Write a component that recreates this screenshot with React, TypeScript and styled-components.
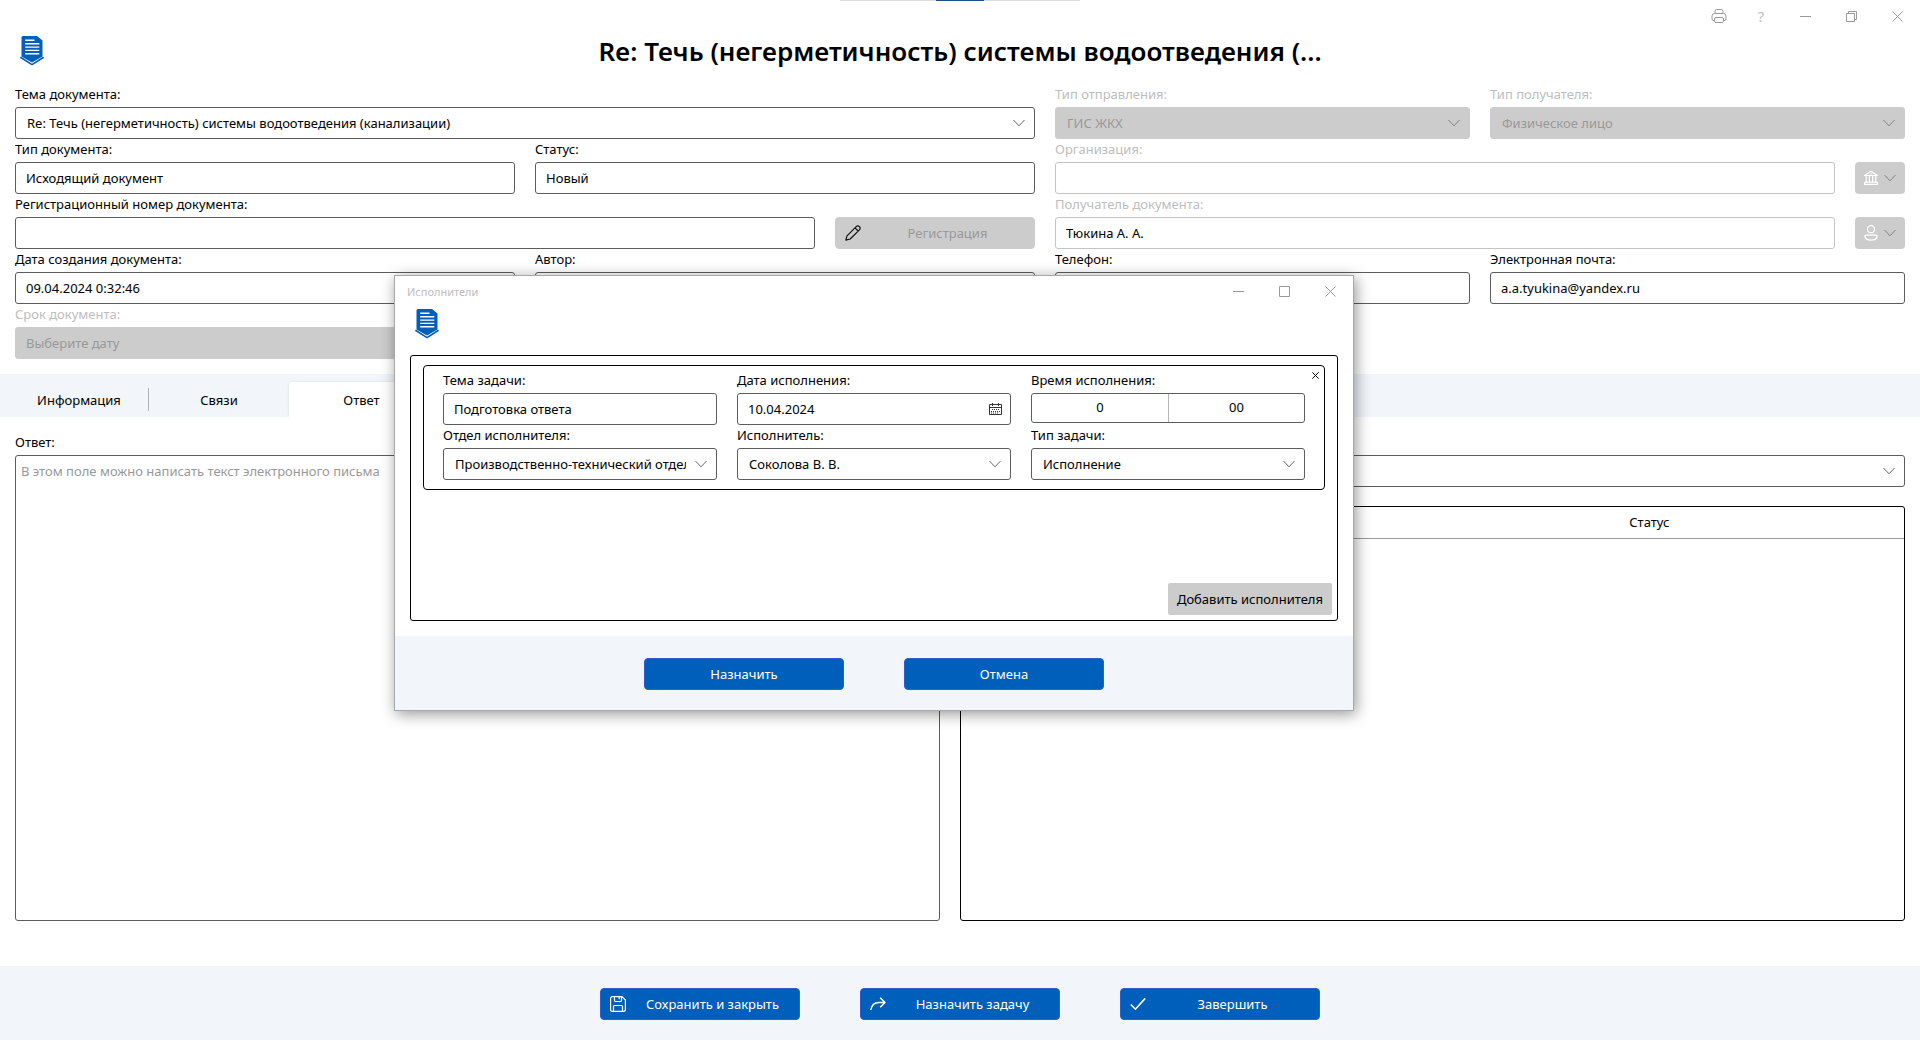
import React, { useId } from 'react';
import styled, { createGlobalStyle } from 'styled-components';

const font = '"Noto Sans", "Open Sans", sans-serif';
const ink = '#000000';
const line = '#5c5c5c';
const muted = '#999999';
const faint = '#bdbdbd';
const fill = '#cccccc';
const panel = '#f2f5fa';
const accent = '#005fba';

const GlobalStyle = createGlobalStyle`
  *, *::before, *::after { box-sizing: border-box; }
  body {
    margin: 0;
    background: #ffffff;
    color: ${ink};
    font-family: ${font};
    font-size: 13px;
  }
  button, input, select, textarea {
    margin: 0;
    font-family: inherit;
    font-size: inherit;
    color: inherit;
  }
  button { padding: 0; border: 0; background: none; }
`;

const Page = styled.div`
  display: flex;
  flex-direction: column;
  min-height: 100vh;
  position: relative;
`;

const DragBar = styled.div`
  position: absolute;
  top: 0;
  left: 50%;
  width: 240px;
  height: 1px;
  margin-left: -120px;
  background: #dcdcdc;
  &::after {
    content: '';
    display: block;
    width: 48px;
    height: 1px;
    margin: 0 auto;
    background: #1d4f86;
  }
`;

const WindowBar = styled.div`
  display: flex;
  justify-content: flex-end;
  align-items: center;
  height: 32px;
`;

const WindowButton = styled.button<{ $narrow?: boolean }>`
  display: flex;
  align-items: center;
  justify-content: center;
  width: ${(p) => (p.$narrow ? '42px' : '46px')};
  height: 32px;
  color: ${muted};
  font-size: 15px;
`;

const HelpMark = styled.span`
  color: ${faint};
`;

const TitleRow = styled.header`
  display: grid;
  grid-template-columns: 48px 1fr 48px;
  align-items: center;
  height: 52px;
  padding: 0 20px 14px;
`;

const Title = styled.h1`
  margin: 0;
  text-align: center;
  font-size: 26px;
  font-weight: 600;
  line-height: 36px;
`;

const Form = styled.form`
  display: grid;
  grid-template-columns: 6fr 5fr;
  column-gap: 20px;
  align-items: start;
  padding: 0 15px;
`;

const Column = styled.div`
  min-width: 0;
`;

const Row = styled.div<{ $cols?: string }>`
  display: grid;
  grid-template-columns: ${(p) => p.$cols ?? 'minmax(0, 1fr)'};
  column-gap: 20px;
  align-items: end;
`;

const FieldBox = styled.div<{ $grow?: boolean }>`
  display: flex;
  flex-direction: column;
  min-width: 0;
  ${(p) => (p.$grow ? 'height: 100%;' : '')}
`;

const Label = styled.label<{ $dim?: boolean }>`
  height: 23px;
  line-height: 20px;
  white-space: nowrap;
  color: ${(p) => (p.$dim ? faint : ink)};
`;

const TextInput = styled.input<{ $soft?: boolean }>`
  width: 100%;
  height: 32px;
  padding: 0 10px;
  border: 1px solid ${(p) => (p.$soft ? '#c4c4c4' : line)};
  border-radius: 3px;
  background: #ffffff;
  outline: 0;
  &::placeholder { color: ${muted}; opacity: 1; }
  &:disabled {
    border-color: ${fill};
    background: ${fill};
    color: ${muted};
  }
`;

const SelectWrap = styled.div<{ $disabled?: boolean }>`
  display: grid;
  grid-template-columns: minmax(0, 1fr) 30px;
  align-items: center;
  height: 32px;
  border: 1px solid ${(p) => (p.$disabled ? fill : line)};
  border-radius: 3px;
  background: ${(p) => (p.$disabled ? fill : '#ffffff')};
  color: ${(p) => (p.$disabled ? muted : ink)};
  svg { justify-self: center; color: ${(p) => (p.$disabled ? '#808080' : '#666666')}; }
`;

const SelectBox = styled.select`
  appearance: none;
  width: 100%;
  height: 30px;
  padding: 0 0 0 11px;
  border: 0;
  background: transparent;
  outline: 0;
  &:disabled { color: inherit; opacity: 1; }
`;

const DateWrap = styled.div`
  display: grid;
  grid-template-columns: minmax(0, 1fr) 29px;
  align-items: center;
  height: 32px;
  border: 1px solid ${line};
  border-radius: 3px;
`;

const BareInput = styled.input<{ $center?: boolean }>`
  width: 100%;
  height: ${(p) => (p.$center ? '26px' : '30px')};
  padding: 0 10px;
  border: 0;
  background: transparent;
  outline: 0;
  text-align: ${(p) => (p.$center ? 'center' : 'left')};
`;

const IconButton = styled.button`
  display: flex;
  align-items: center;
  justify-content: center;
  height: 28px;
`;

const TimeWrap = styled.div`
  display: grid;
  grid-template-columns: 1fr 1fr;
  height: 30px;
  margin-bottom: 2px;
  border: 1px solid ${line};
  border-radius: 3px;
`;

const TimePart = styled.div`
  & + & { border-left: 1px solid #b5b5b5; }
`;

const ActionButton = styled.button<{ $muted?: boolean }>`
  display: flex;
  align-items: center;
  width: 200px;
  height: 32px;
  padding-left: 9px;
  border: 1px solid ${(p) => (p.$muted ? fill : '#2f5fc4')};
  border-radius: 4px;
  background: ${(p) => (p.$muted ? fill : accent)};
  color: ${(p) => (p.$muted ? muted : '#ffffff')};
  span { flex: 1; text-align: center; }
`;

const PlainButton = styled(ActionButton)`
  padding-left: 0;
`;

const PickerButton = styled.button`
  display: flex;
  align-items: center;
  justify-content: center;
  gap: 6px;
  width: 50px;
  height: 32px;
  border-radius: 4px;
  background: ${fill};
  color: #808080;
  svg:first-child { color: #ffffff; }
`;

const Tabs = styled.nav`
  display: flex;
  align-items: flex-end;
  height: 43px;
  margin-top: 15px;
  padding-left: 9px;
  background: ${panel};
`;

const Tab = styled.button<{ $active?: boolean; $divided?: boolean }>`
  position: relative;
  width: ${(p) => (p.$active ? '145px' : '140px')};
  height: 35px;
  background: ${(p) => (p.$active ? '#ffffff' : 'transparent')};
  border-radius: 3px 3px 0 0;
  box-shadow: ${(p) => (p.$active ? '0 0 3px rgba(0, 0, 0, 0.1)' : 'none')};
  ${(p) =>
    p.$divided
      ? `&::after {
    content: '';
    position: absolute;
    top: 6px;
    right: 0;
    width: 1px;
    height: 23px;
    background: #b0b4b8;
  }`
      : ''}
`;

const Reply = styled.main`
  display: grid;
  grid-template-columns: 185fr 189fr;
  column-gap: 20px;
  flex: 1;
  padding: 15px 15px 45px;
  background: #ffffff;
  position: relative;
`;

const ReplyText = styled.textarea`
  flex: 1;
  width: 100%;
  padding: 5px;
  border: 1px solid ${line};
  border-radius: 3px;
  resize: none;
  outline: 0;
  line-height: 20px;
  &::placeholder { color: ${muted}; opacity: 1; }
`;

const Side = styled.section`
  display: flex;
  flex-direction: column;
  gap: 19px;
  padding-top: 23px;
`;

const TableFrame = styled.div`
  flex: 1;
  border: 1px solid ${ink};
  border-radius: 3px;
`;

const Table = styled.table`
  width: 100%;
  border-collapse: collapse;
  table-layout: fixed;
  th {
    height: 31px;
    padding: 0;
    border-bottom: 1px solid ${muted};
    font-weight: 400;
    text-align: center;
  }
  th:first-child { width: 46%; }
`;

const Footer = styled.footer`
  display: flex;
  justify-content: center;
  gap: 60px;
  height: 74px;
  padding-top: 22px;
  background: ${panel};
`;

const Dialog = styled.div`
  position: absolute;
  top: 275px;
  left: 394px;
  width: 960px;
  border: 1px solid #a6a8aa;
  background: #ffffff;
  box-shadow: 2px 3px 14px rgba(0, 0, 0, 0.42);
`;

const DialogBar = styled.div`
  display: flex;
  align-items: center;
  height: 30px;
  padding-left: 12px;
  color: ${faint};
  font-size: 11px;
  span { flex: 1; }
`;

const DialogBody = styled.div`
  padding: 3px 15px 15px;
`;

const DialogLogo = styled.div`
  height: 46px;
  padding-left: 5px;
`;

const PerformerList = styled.div`
  display: flex;
  flex-direction: column;
  justify-content: space-between;
  height: 266px;
  padding: 9px 5px 5px 12px;
  border: 1px solid ${ink};
  border-radius: 3px;
`;

const Performer = styled.fieldset`
  position: relative;
  display: grid;
  grid-template-columns: repeat(3, minmax(0, 1fr));
  column-gap: 20px;
  margin: 0 7px 0 0;
  padding: 4px 19px 9px;
  border: 1px solid ${ink};
  border-radius: 4px;
`;

const RemoveButton = styled.button`
  position: absolute;
  top: 3px;
  right: 3px;
  display: flex;
  align-items: center;
  justify-content: center;
  width: 12px;
  height: 12px;
`;

const AddButton = styled.button`
  align-self: flex-end;
  height: 32px;
  padding: 0 9px;
  border-radius: 2px;
  background: ${fill};
`;

/* ---- icons ---- */

const Chevron = () => (
  <svg width="12" height="8" viewBox="0 0 12 8" fill="none" stroke="currentColor" aria-hidden="true">
    <path d="M0.5 1L6 6.8L11.5 1" />
  </svg>
);

const Logo = () => (
  <svg width="24" height="30" viewBox="0 0 24 30" aria-hidden="true">
    <path d="M3 0H17L22.5 4.5V20.5L12 26.6L1.5 20.5V1.5Q1.5 0 3 0Z" fill="#005fba" />
    <path d="M0.4 21.2L12 28.6L23.6 21.2" fill="none" stroke="#005fba" strokeWidth="1.7" />
    <path d="M5.2 4.2H14.5M5.2 7.7H19.3M5.2 11.1H19.3M5.2 14.4H19.3M5.2 17.7H19.3" stroke="#fff" strokeWidth="1.4" fill="none" />
  </svg>
);

const Printer = () => (
  <svg width="16" height="16" viewBox="0 0 16 16" fill="none" stroke="currentColor" aria-hidden="true">
    <path d="M4 5.5V3.5Q4 1.5 5.5 1.5H10.5Q12 1.5 12 3.5V5.5M3.5 12.5H2.5Q1 12.5 1 11V8Q1 5.5 3.5 5.5H12.5Q15 5.5 15 8V11Q15 12.5 13.5 12.5H12.5M5 9.5H11Q12.5 9.5 12.5 11V13Q12.5 14.5 11 14.5H5Q3.5 14.5 3.5 13V11Q3.5 9.5 5 9.5Z" />
  </svg>
);

const Minimize = () => (
  <svg width="11" height="11" viewBox="0 0 11 11" stroke="currentColor" aria-hidden="true">
    <path d="M0 5.5H11" />
  </svg>
);

const Maximize = () => (
  <svg width="11" height="11" viewBox="0 0 11 11" fill="none" stroke="currentColor" aria-hidden="true">
    <path d="M0.5 0.5H10.5V10.5H0.5Z" />
  </svg>
);

const Restore = () => (
  <svg width="11" height="11" viewBox="0 0 11 11" fill="none" stroke="currentColor" aria-hidden="true">
    <path d="M0.5 2.5H8.5V10.5H0.5ZM2.5 2.5V0.5H10.5V8.5H8.5" />
  </svg>
);

const Cross = ({ size = 11 }: { size?: number }) => (
  <svg width={size} height={size} viewBox="0 0 11 11" fill="none" stroke="currentColor" strokeWidth={11 / size} aria-hidden="true">
    <path d="M0.5 0.5L10.5 10.5M10.5 0.5L0.5 10.5" />
  </svg>
);

const Pencil = () => (
  <svg width="16" height="16" viewBox="0 0 16 16" fill="none" stroke="#111" strokeWidth="1.2" strokeLinejoin="round" aria-hidden="true">
    <path d="M0.8 15.2L2 10.8L11.2 1.6Q12.8 0.1 14.4 1.6Q15.9 3.2 14.4 4.8L5.2 14L0.8 15.2ZM10 2.8L13.2 6" />
  </svg>
);

const Floppy = () => (
  <svg width="16" height="16" viewBox="0 0 16 16" fill="none" stroke="currentColor" strokeWidth="1.2" aria-hidden="true">
    <path d="M2.5 0.6H12L15.4 4V13.5Q15.4 15.4 13.5 15.4H2.5Q0.6 15.4 0.6 13.5V2.5Q0.6 0.6 2.5 0.6ZM4.5 0.6V4.5Q4.5 5.5 5.5 5.5H10.5Q11.5 5.5 11.5 4.5V0.6M3.5 15.4V10.5Q3.5 9.5 4.5 9.5H11.5Q12.5 9.5 12.5 10.5V15.4M9.2 1V3.2" />
  </svg>
);

const Forward = () => (
  <svg width="16" height="14" viewBox="0 0 16 14" fill="none" stroke="currentColor" strokeWidth="1.5" aria-hidden="true">
    <path d="M0.8 13Q2 5.5 9 5.5H15M10.2 0.8L15 5.5L10.2 10.2" />
  </svg>
);

const Check = () => (
  <svg width="16" height="14" viewBox="0 0 16 14" fill="none" stroke="currentColor" strokeWidth="1.6" aria-hidden="true">
    <path d="M0.8 7.5L5.4 12.2L15.2 1.4" />
  </svg>
);

const Bank = () => (
  <svg width="14" height="16" viewBox="0 0 14 16" fill="none" stroke="currentColor" strokeWidth="1.2" aria-hidden="true">
    <path d="M0.7 5.5L7 1.2L13.3 5.5ZM2.2 6V12M5.4 6V12M8.6 6V12M11.8 6V12M1 12.2H13M0 14.4H14M6 4H8M0.6 12V14.4M13.4 12V14.4" />
  </svg>
);

const Person = () => (
  <svg width="14" height="16" viewBox="0 0 14 16" fill="none" stroke="currentColor" strokeWidth="1.3" aria-hidden="true">
    <circle cx="7" cy="4.2" r="3.5" />
    <path d="M2 10.2H12Q13.2 10.2 13.2 11.2Q12.6 15.2 7 15.2Q1.4 15.2 0.8 11.2Q0.8 10.2 2 10.2Z" />
  </svg>
);

const Calendar = () => (
  <svg width="13" height="13" viewBox="0 0 13 13" fill="none" stroke="#333" aria-hidden="true">
    <path d="M0.5 1.5H12.5V11.5H0.5ZM0.5 4.5H12.5M3.5 0V3M9.5 0V3" />
    <path d="M3 6.5H11M2 8.5H11M2 10H9" strokeDasharray="1 1" />
  </svg>
);

/* ---- fields ---- */

type FieldProps = { label: string; value?: string; dim?: boolean; disabled?: boolean; placeholder?: string };

const TextField = ({ label, value = '', dim, disabled, placeholder }: FieldProps) => {
  const id = useId();
  return (
    <FieldBox>
      <Label htmlFor={id} $dim={dim}>{label}</Label>
      <TextInput id={id} defaultValue={value} $soft={dim} disabled={disabled} placeholder={placeholder} />
    </FieldBox>
  );
};

const SelectField = ({ label, value = '', dim, disabled }: FieldProps) => {
  const id = useId();
  return (
    <FieldBox>
      <Label htmlFor={id} $dim={dim}>{label}</Label>
      <SelectWrap $disabled={disabled}>
        <SelectBox id={id} disabled={disabled}>
          <option>{value}</option>
        </SelectBox>
        <Chevron />
      </SelectWrap>
    </FieldBox>
  );
};

const halves = 'repeat(2, minmax(0, 1fr))';

const DocumentForm = () => (
  <Form>
    <Column>
      <SelectField label="Тема документа:" value="Re: Течь (негерметичность) системы водоотведения (канализации)" />
      <Row $cols={halves}>
        <TextField label="Тип документа:" value="Исходящий документ" />
        <TextField label="Статус:" value="Новый" />
      </Row>
      <Row $cols="minmax(0, 1fr) 200px">
        <TextField label="Регистрационный номер документа:" />
        <ActionButton type="button" $muted>
          <Pencil />
          <span>Регистрация</span>
        </ActionButton>
      </Row>
      <Row $cols={halves}>
        <TextField label="Дата создания документа:" value="09.04.2024 0:32:46" />
        <TextField label="Автор:" />
      </Row>
      <Row $cols={halves}>
        <TextField label="Срок документа:" placeholder="Выберите дату" dim disabled />
      </Row>
    </Column>
    <Column>
      <Row $cols={halves}>
        <SelectField label="Тип отправления:" value="ГИС ЖКХ" dim disabled />
        <SelectField label="Тип получателя:" value="Физическое лицо" dim disabled />
      </Row>
      <Row $cols="minmax(0, 1fr) 50px">
        <TextField label="Организация:" dim />
        <PickerButton type="button" aria-label="Выбрать организацию"><Bank /><Chevron /></PickerButton>
      </Row>
      <Row $cols="minmax(0, 1fr) 50px">
        <TextField label="Получатель документа:" value="Тюкина А. А." dim />
        <PickerButton type="button" aria-label="Выбрать получателя"><Person /><Chevron /></PickerButton>
      </Row>
      <Row $cols={halves}>
        <TextField label="Телефон:" />
        <TextField label="Электронная почта:" value="a.a.tyukina@yandex.ru" />
      </Row>
    </Column>
  </Form>
);

const PerformersDialog = () => (
  <Dialog role="dialog" aria-label="Исполнители">
    <DialogBar>
      <span>Исполнители</span>
      <WindowButton aria-label="Свернуть"><Minimize /></WindowButton>
      <WindowButton aria-label="Развернуть"><Maximize /></WindowButton>
      <WindowButton aria-label="Закрыть"><Cross /></WindowButton>
    </DialogBar>
    <DialogBody>
      <DialogLogo><Logo /></DialogLogo>
      <PerformerList>
        <Performer>
          <TextField label="Тема задачи:" value="Подготовка ответа" />
          <FieldBox>
            <Label htmlFor="due-date">Дата исполнения:</Label>
            <DateWrap>
              <BareInput id="due-date" defaultValue="10.04.2024" />
              <IconButton aria-label="Открыть календарь"><Calendar /></IconButton>
            </DateWrap>
          </FieldBox>
          <FieldBox>
            <Label htmlFor="due-hours">Время исполнения:</Label>
            <TimeWrap>
              <TimePart><BareInput id="due-hours" defaultValue="0" $center /></TimePart>
              <TimePart><BareInput aria-label="Минуты" defaultValue="00" $center /></TimePart>
            </TimeWrap>
          </FieldBox>
          <SelectField label="Отдел исполнителя:" value="Производственно-технический отдел" />
          <SelectField label="Исполнитель:" value="Соколова В. В." />
          <SelectField label="Тип задачи:" value="Исполнение" />
          <RemoveButton type="button" aria-label="Удалить исполнителя"><Cross size={7} /></RemoveButton>
        </Performer>
        <AddButton type="button">Добавить исполнителя</AddButton>
      </PerformerList>
    </DialogBody>
    <Footer>
      <PlainButton type="button"><span>Назначить</span></PlainButton>
      <PlainButton type="button"><span>Отмена</span></PlainButton>
    </Footer>
  </Dialog>
);

export default function App() {
  return (
    <Page>
      <GlobalStyle />
      <DragBar />
      <WindowBar>
        <WindowButton $narrow aria-label="Печать"><Printer /></WindowButton>
        <WindowButton $narrow aria-label="Справка"><HelpMark>?</HelpMark></WindowButton>
        <WindowButton aria-label="Свернуть"><Minimize /></WindowButton>
        <WindowButton aria-label="Восстановить"><Restore /></WindowButton>
        <WindowButton aria-label="Закрыть"><Cross /></WindowButton>
      </WindowBar>
      <TitleRow>
        <Logo />
        <Title>Re: Течь (негерметичность) системы водоотведения (...</Title>
      </TitleRow>
      <DocumentForm />
      <Tabs>
        <Tab $divided>Информация</Tab>
        <Tab>Связи</Tab>
        <Tab $active>Ответ</Tab>
      </Tabs>
      <Reply>
        <FieldBox $grow>
          <Label htmlFor="reply">Ответ:</Label>
          <ReplyText id="reply" placeholder="В этом поле можно написать текст электронного письма" />
        </FieldBox>
        <Side>
          <SelectWrap>
            <SelectBox aria-label="Шаблон ответа"><option></option></SelectBox>
            <Chevron />
          </SelectWrap>
          <TableFrame>
            <Table>
              <thead>
                <tr>
                  <th scope="col" />
                  <th scope="col">Статус</th>
                </tr>
              </thead>
            </Table>
          </TableFrame>
        </Side>
      </Reply>
      <Footer>
        <ActionButton type="button"><Floppy /><span>Сохранить и закрыть</span></ActionButton>
        <ActionButton type="button"><Forward /><span>Назначить задачу</span></ActionButton>
        <ActionButton type="button"><Check /><span>Завершить</span></ActionButton>
      </Footer>
      <PerformersDialog />
    </Page>
  );
}
